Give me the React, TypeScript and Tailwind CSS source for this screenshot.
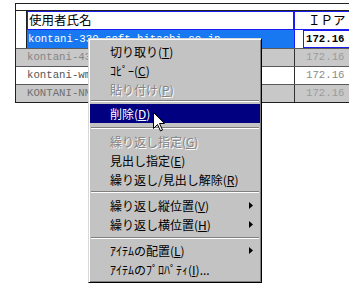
import React from "react";

type Item =
  | { kind: "sep"; cls: string }
  | { kind: "item"; label: string; key: string; rest?: string; disabled?: boolean; active?: boolean; sub?: boolean };

const items: Item[] = [
  { kind: "item", label: "切り取り(", key: "T", rest: ")" },
  { kind: "item", label: "ｺﾋﾟｰ(", key: "C", rest: ")" },
  { kind: "item", label: "貼り付け(", key: "P", rest: ")", disabled: true },
  { kind: "sep", cls: "h-[5px] pt-[1px]" },
  { kind: "item", label: "削除(", key: "D", rest: ")", active: true },
  { kind: "sep", cls: "h-[9px] pt-[4px]" },
  { kind: "item", label: "繰り返し指定(", key: "G", rest: ")", disabled: true },
  { kind: "item", label: "見出し指定(", key: "E", rest: ")" },
  { kind: "item", label: "繰り返し/見出し解除(", key: "R", rest: ")" },
  { kind: "sep", cls: "h-[7px] pt-[2px]" },
  { kind: "item", label: "繰り返し縦位置(", key: "V", rest: ")", sub: true },
  { kind: "item", label: "繰り返し横位置(", key: "H", rest: ")", sub: true },
  { kind: "sep", cls: "h-[7px] pt-[3px]" },
  { kind: "item", label: "ｱｲﾃﾑの配置(", key: "L", rest: ")", sub: true },
  { kind: "item", label: "ｱｲﾃﾑのﾌﾟﾛﾊﾟﾃｨ(", key: "I", rest: ")..." },
];

const rows = [
  { name: "kontani-430.soft.hitachi.co.jp", bg: "bg-[#c8c8c8]", text: "text-[#858585]", ip: "text-[#9c9c9c]" },
  { name: "kontani-wm.soft.hitachi.co.jp", bg: "bg-white", text: "text-[#555]", ip: "text-[#8a8a8a]" },
  { name: "KONTANI-NM.soft.hitachi.co.jp", bg: "bg-[#c8c8c8]", text: "text-[#707070]", ip: "text-[#9c9c9c]" },
];

function Menu() {
  return (
    <div className="absolute left-[88px] top-[38px] w-[174px] bg-[#c3c3c3] border border-t-[#d8d8d8] border-l-[#d8d8d8] border-b-black border-r-black shadow-[inset_1px_1px_0_#ffffff,inset_-1px_-1px_0_#808080] pt-[3px] pb-[3px] font-['Noto_Sans_CJK_JP',sans-serif] text-[12px] leading-none">
      {items.map((it, i) =>
        it.kind === "sep" ? (
          <div key={i} className={`mx-[2px] ${it.cls}`}>
            <div className="border-t border-t-[#808080] border-b border-b-white" />
          </div>
        ) : (
          <div
            key={i}
            className={`mx-[1px] h-[19px] flex items-center justify-between pl-[20px] pr-[7px] ${
              it.active ? "bg-[#000080] text-white" : it.disabled ? "text-[#848484] [text-shadow:1px_1px_0_#ffffff]" : "text-black"
            }`}
          >
            <span>
              {it.label}
              <u>{it.key}</u>
              {it.rest}
            </span>
            {it.sub && (
              <svg width="4" height="7" viewBox="0 0 4 7">
                <path d="M0 0 L4 3.5 L0 7 Z" fill="#000" />
              </svg>
            )}
          </div>
        )
      )}
    </div>
  );
}

export default function App() {
  return (
    <div className="relative w-[349px] h-[293px] overflow-hidden bg-white">
      <div className="ml-[15px] mt-[3px] w-[420px] border border-[#202020]">
        <div className="h-[7px] border-b border-[#202020] bg-white" />
        {/* header */}
        <div className="flex h-[19px] bg-white">
          <div className="w-[11px] border-r border-[#202020]" />
          <div className="w-[267px] border border-[#1c1cf0] flex items-center pl-[1px] font-['Noto_Sans_CJK_JP',sans-serif] text-[12.5px] leading-none text-black">
            使用者氏名
          </div>
          <div className="flex-1 border border-[#1c1cf0] flex items-center pl-[13px] font-['Noto_Sans_CJK_JP',sans-serif] text-[12.5px] leading-none text-black">
            ＩＰア
          </div>
        </div>
        {/* selected row */}
        <div className="flex h-[18px] font-['Liberation_Mono',monospace] text-[10.7px] leading-none">
          <div className="w-[11px] bg-white border-r border-[#202020]" />
          <div className="w-[267px] bg-[#1878f2] text-white flex items-center pl-[1px]">
            kontani-330.soft.hitachi.co.jp
          </div>
          <div className="w-px bg-[#1c1cf0]" />
          <div className="flex-1 bg-white pl-[8px]">
            <div className="h-full border border-[#1c1cf0] flex items-center pl-[2px] font-bold text-black">
              172.16
            </div>
          </div>
        </div>
        {rows.map((r) => (
          <div key={r.name} className={`flex h-[18px] border-t border-[#5a5a5a] ${r.bg} font-['Liberation_Mono',monospace] text-[10.7px] leading-none`}>
            <div className={`w-[278px] flex items-center pl-[11px] ${r.text}`}>{r.name}</div>
            <div className={`flex-1 border-l border-[#303030] flex items-center pl-[11px] ${r.ip}`}>172.16</div>
          </div>
        ))}
      </div>
      <Menu />
      <svg className="absolute left-[153px] top-[112px]" width="12" height="20" viewBox="0 0 12 20">
        <path d="M0.5 0.5 L0.5 16.5 L4.5 12.5 L7.5 19 L9.5 18 L6.5 11.5 L11.5 11.5 Z" fill="#fff" stroke="#000" strokeWidth="1" />
      </svg>
    </div>
  );
}
